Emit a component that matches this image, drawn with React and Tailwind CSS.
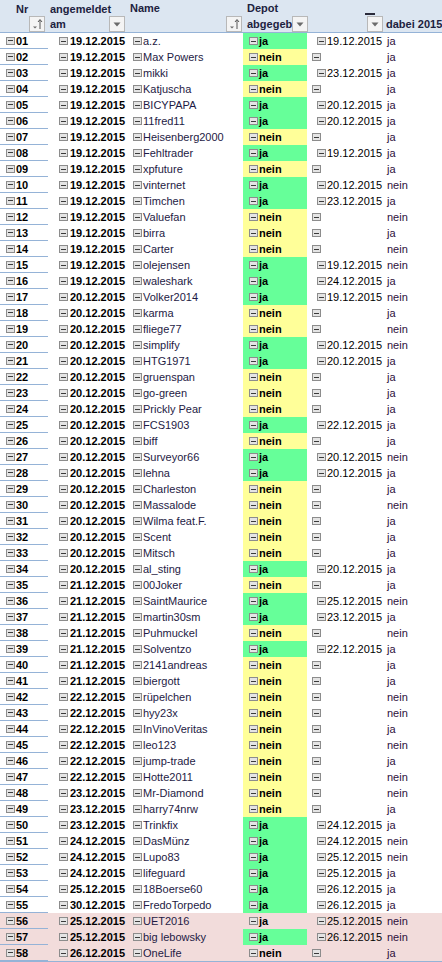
import React from 'react';

// Nr, angemeldet, Name, Depot, Datum Depot, dabei 2015
const rows = [
  ['01', '19.12.2015', 'a.z.', 'ja', '19.12.2015', 'ja'],
  ['02', '19.12.2015', 'Max Powers', 'nein', '', 'ja'],
  ['03', '19.12.2015', 'mikki', 'ja', '23.12.2015', 'ja'],
  ['04', '19.12.2015', 'Katjuscha', 'nein', '', 'ja'],
  ['05', '19.12.2015', 'BICYPAPA', 'ja', '20.12.2015', 'ja'],
  ['06', '19.12.2015', '11fred11', 'ja', '20.12.2015', 'ja'],
  ['07', '19.12.2015', 'Heisenberg2000', 'nein', '', 'ja'],
  ['08', '19.12.2015', 'Fehltrader', 'ja', '19.12.2015', 'ja'],
  ['09', '19.12.2015', 'xpfuture', 'nein', '', 'ja'],
  ['10', '19.12.2015', 'vinternet', 'ja', '20.12.2015', 'nein'],
  ['11', '19.12.2015', 'Timchen', 'ja', '23.12.2015', 'ja'],
  ['12', '19.12.2015', 'Valuefan', 'nein', '', 'nein'],
  ['13', '19.12.2015', 'birra', 'nein', '', 'ja'],
  ['14', '19.12.2015', 'Carter', 'nein', '', 'nein'],
  ['15', '19.12.2015', 'olejensen', 'ja', '19.12.2015', 'nein'],
  ['16', '19.12.2015', 'waleshark', 'ja', '24.12.2015', 'ja'],
  ['17', '20.12.2015', 'Volker2014', 'ja', '19.12.2015', 'nein'],
  ['18', '20.12.2015', 'karma', 'nein', '', 'ja'],
  ['19', '20.12.2015', 'fliege77', 'nein', '', 'nein'],
  ['20', '20.12.2015', 'simplify', 'ja', '20.12.2015', 'nein'],
  ['21', '20.12.2015', 'HTG1971', 'ja', '20.12.2015', 'ja'],
  ['22', '20.12.2015', 'gruenspan', 'nein', '', 'ja'],
  ['23', '20.12.2015', 'go-green', 'nein', '', 'ja'],
  ['24', '20.12.2015', 'Prickly Pear', 'nein', '', 'ja'],
  ['25', '20.12.2015', 'FCS1903', 'ja', '22.12.2015', 'ja'],
  ['26', '20.12.2015', 'biff', 'nein', '', 'ja'],
  ['27', '20.12.2015', 'Surveyor66', 'ja', '20.12.2015', 'nein'],
  ['28', '20.12.2015', 'lehna', 'ja', '20.12.2015', 'ja'],
  ['29', '20.12.2015', 'Charleston', 'nein', '', 'ja'],
  ['30', '20.12.2015', 'Massalode', 'nein', '', 'nein'],
  ['31', '20.12.2015', 'Wilma feat.F.', 'nein', '', 'ja'],
  ['32', '20.12.2015', 'Scent', 'nein', '', 'ja'],
  ['33', '20.12.2015', 'Mitsch', 'nein', '', 'ja'],
  ['34', '20.12.2015', 'al_sting', 'ja', '20.12.2015', 'ja'],
  ['35', '21.12.2015', '00Joker', 'nein', '', 'ja'],
  ['36', '21.12.2015', 'SaintMaurice', 'ja', '25.12.2015', 'nein'],
  ['37', '21.12.2015', 'martin30sm', 'ja', '23.12.2015', 'ja'],
  ['38', '21.12.2015', 'Puhmuckel', 'nein', '', 'nein'],
  ['39', '21.12.2015', 'Solventzo', 'ja', '22.12.2015', 'ja'],
  ['40', '21.12.2015', '2141andreas', 'nein', '', 'ja'],
  ['41', '21.12.2015', 'biergott', 'nein', '', 'ja'],
  ['42', '22.12.2015', 'rüpelchen', 'nein', '', 'nein'],
  ['43', '22.12.2015', 'hyy23x', 'nein', '', 'nein'],
  ['44', '22.12.2015', 'InVinoVeritas', 'nein', '', 'ja'],
  ['45', '22.12.2015', 'leo123', 'nein', '', 'nein'],
  ['46', '22.12.2015', 'jump-trade', 'nein', '', 'ja'],
  ['47', '22.12.2015', 'Hotte2011', 'nein', '', 'nein'],
  ['48', '23.12.2015', 'Mr-Diamond', 'nein', '', 'nein'],
  ['49', '23.12.2015', 'harry74nrw', 'nein', '', 'ja'],
  ['50', '23.12.2015', 'Trinkfix', 'ja', '24.12.2015', 'ja'],
  ['51', '24.12.2015', 'DasMünz', 'ja', '24.12.2015', 'nein'],
  ['52', '24.12.2015', 'Lupo83', 'ja', '25.12.2015', 'nein'],
  ['53', '24.12.2015', 'lifeguard', 'ja', '25.12.2015', 'ja'],
  ['54', '25.12.2015', '18Boerse60', 'ja', '26.12.2015', 'ja'],
  ['55', '30.12.2015', 'FredoTorpedo', 'ja', '26.12.2015', 'ja'],
  ['56', '25.12.2015', 'UET2016', 'ja', '25.12.2015', 'nein'],
  ['57', '25.12.2015', 'big lebowsky', 'ja', '26.12.2015', 'nein'],
  ['58', '26.12.2015', 'OneLife', 'nein', '', 'ja'],
];

// Zeilen mit rosa Hintergrund, und Depotzellen ohne grün/gelb
const pinkRows = ['56', '57', '58'];
const noFill = ['56', '58'];

const Minus = () => (
  <span className="inline-flex shrink-0 w-[9px] h-[8px] items-center justify-center border border-[#8c8c8c] bg-[#e4e4e4]">
    <span className="w-[5px] h-px bg-[#3a3a3a]" />
  </span>
);

const FilterButton = () => (
  <span className="inline-flex shrink-0 w-[16px] h-[16px] items-center justify-center border border-[#b8b8b8] bg-[#f4f4f4]">
    <svg width="8" height="5" viewBox="0 0 8 5">
      <path d="M0.5 0.5 L7.5 0.5 L4 4.5 Z" fill="#6b6b6b" />
    </svg>
  </span>
);

const SortButton = () => (
  <span className="inline-flex shrink-0 w-[16px] h-[16px] items-center justify-center border border-[#b8b8b8] bg-[#f4f4f4]">
    <svg width="12" height="12" viewBox="0 0 12 12">
      <path d="M2 8.5 L6 8.5 L4 10.5 Z" fill="#6b6b6b" />
      <path d="M9 11 L9 2" stroke="#555" strokeWidth="1" />
      <path d="M7 4 L9 1.5 L11 4" stroke="#555" strokeWidth="1" fill="none" />
    </svg>
  </span>
);

const App = () => {
  return (
    <div
      className="w-[442px] h-[962px] overflow-hidden bg-white text-[11px] leading-[16px] text-black"
      style={{ fontFamily: '"Liberation Sans", Arial, sans-serif' }}
    >
      {/* Kopfzeile */}
      <div className="flex h-[33px] bg-[#dce6f1] border-b border-[#95b3d7] font-bold text-[#1c2240]">
        <div className="w-[48px] flex flex-col pr-[3px]">
          <div className="h-[16px] pl-[16px] pt-[1px]">Nr</div>
          <div className="flex justify-end"><SortButton /></div>
        </div>
        <div className="w-[80px] flex flex-col pl-[2px] pr-[3px]">
          <div className="h-[16px] pt-[1px]">angemeldet</div>
          <div className="flex items-center justify-between"><span>am</span><FilterButton /></div>
        </div>
        <div className="w-[115px] flex flex-col pl-[2px] pr-[1px]">
          <div className="h-[16px]">Name</div>
          <div className="flex justify-end"><SortButton /></div>
        </div>
        <div className="w-[64px] flex flex-col pl-[4px] pr-[2px]">
          <div className="h-[16px]">Depot</div>
          <div className="flex items-center justify-between">
            <span className="whitespace-nowrap">abgegeb</span>
            <FilterButton />
          </div>
        </div>
        <div className="w-[78px] flex flex-col pr-[2px]">
          <div className="h-[16px] flex items-end justify-end pr-[8px] pb-[1px]">
            <span className="w-[10px] h-[2px] bg-[#2a2a3a]" />
          </div>
          <div className="flex justify-end"><FilterButton /></div>
        </div>
        <div className="w-[57px] flex flex-col pl-[1px]">
          <div className="h-[16px]" />
          <div className="whitespace-nowrap">dabei 2015</div>
        </div>
      </div>

      {/* Datenzeilen */}
      <div className="border-b border-[#95b3d7]">
        {rows.map(([nr, am, name, depot, datum, dabei]) => {
          const pink = pinkRows.includes(nr);
          const fill = noFill.includes(nr) ? '' : depot === 'ja' ? 'bg-[#66ff99]' : 'bg-[#ffff99]';
          return (
            <div key={nr} className={`flex h-[16px] ${pink ? 'bg-[#f2dcdb]' : ''}`}>
              <div className="w-[48px] flex items-center gap-[1px] pl-[6px] font-bold border-b border-[#95b3d7]">
                <Minus />
                <span>{nr}</span>
              </div>
              <div className="w-[80px] flex items-center gap-[2px] pl-[11px] font-bold">
                <Minus />
                <span>{am}</span>
              </div>
              <div className="w-[115px] flex items-center gap-[1px] pl-[5px] text-[#1e1a44] whitespace-nowrap">
                <Minus />
                <span>{name}</span>
              </div>
              <div className={`w-[64px] flex items-center gap-[1px] pl-[6px] font-bold ${fill}`}>
                <Minus />
                <span>{depot}</span>
              </div>
              <div className={`w-[78px] flex items-center gap-[1px] ${datum ? 'pl-[10px]' : 'pl-[5px]'}`}>
                <Minus />
                <span>{datum}</span>
              </div>
              <div className="w-[57px] flex items-center pl-[2px] text-[#2e0f3c]">{dabei}</div>
            </div>
          );
        })}
      </div>
    </div>
  );
};

export default App;
